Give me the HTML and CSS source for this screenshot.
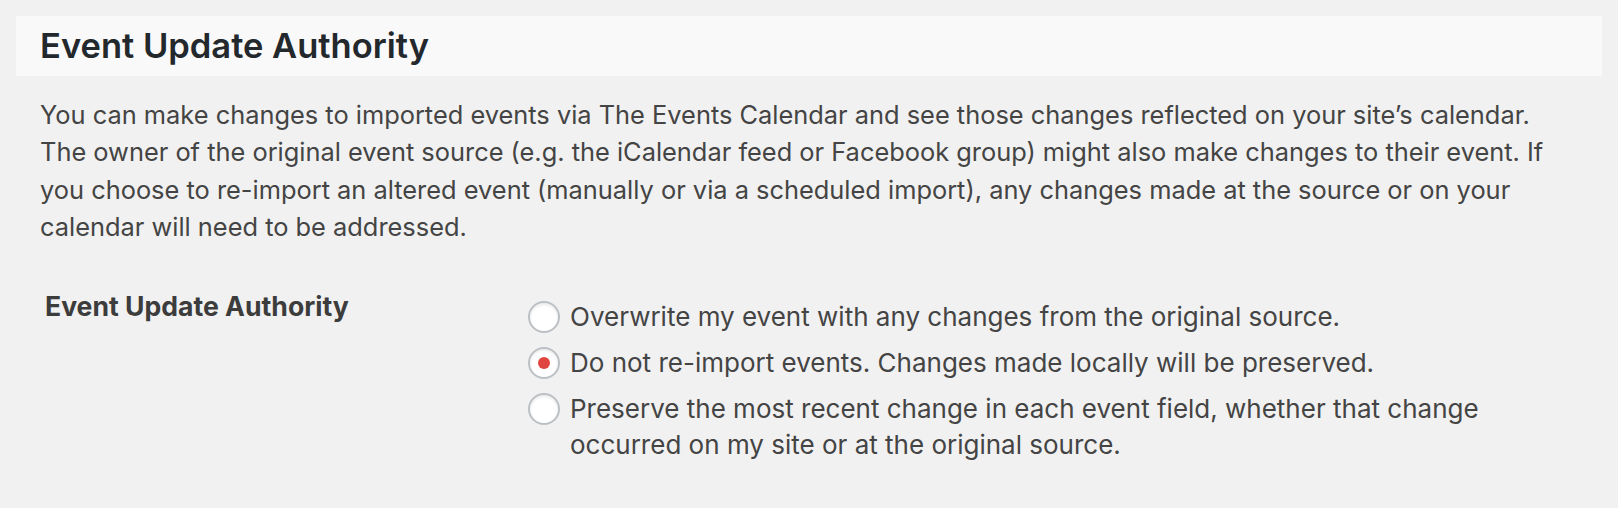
FILE: index.html
```html
<!DOCTYPE html>
<html lang="en">
<head>
<meta charset="utf-8">
<title>Event Update Authority</title>
<link rel="stylesheet" href="styles.css">
</head>
<body>
<div class="page">
  <div class="section-head">
    <h3 class="section-title">Event Update Authority</h3>
  </div>
  <p class="intro">You can make changes to imported events via The Events Calendar and see those changes reflected on your site’s calendar.<br>The owner of the original event source (e.g. the iCalendar feed or Facebook group) might also make changes to their event. If<br>you choose to re-import an altered event (manually or via a scheduled import), any changes made at the source or on your<br>calendar will need to be addressed.</p>
  <div class="field">
    <div class="field-label">Event Update Authority</div>
    <div class="options">
      <label class="option">
        <span class="radio"></span>
        <span class="option-text">Overwrite my event with any changes from the original source.</span>
      </label>
      <label class="option">
        <span class="radio checked"></span>
        <span class="option-text">Do not re-import events. Changes made locally will be preserved.</span>
      </label>
      <label class="option">
        <span class="radio"></span>
        <span class="option-text">Preserve the most recent change in each event field, whether that change<br>occurred on my site or at the original source.</span>
      </label>
    </div>
  </div>
</div>
</body>
</html>
```

FILE: styles.css
```css
html, body {
  margin: 0;
  padding: 0;
  background: #f1f1f1;
}

body {
  font-family: Inter, "Noto Sans", "Liberation Sans", sans-serif;
  color: #444;
}

.page {
  padding: 16px 16px 0 16px;
}

.section-head {
  background: #f9f9f9;
  height: 60px;
  padding-left: 24px;
  display: flex;
  align-items: center;
}

.section-title {
  margin: 0;
  font-size: 34.5px;
  font-weight: 600;
  line-height: 60px;
  color: #23282d;
}

.intro {
  margin: 20px 0 0 24px;
  font-size: 25.4px;
  line-height: 37.33px;
  color: #444;
  white-space: nowrap;
}

.field {
  display: flex;
  margin: 48px 0 0 24px;
}

.field-label {
  width: 483px;
  padding-left: 5px;
  flex: none;
  font-size: 26.6px;
  font-weight: 700;
  line-height: 27px;
  color: #3c3c3c;
}

.options {
  display: flex;
  flex-direction: column;
  gap: 9.6px;
  padding-top: 5.3px;
}

.option {
  display: flex;
  align-items: flex-start;
  gap: 10px;
  font-size: 26px;
  line-height: 36.4px;
  color: #444;
}

.option-text {
  white-space: nowrap;
}

.radio {
  flex: none;
  width: 32px;
  height: 32px;
  margin-top: 2.2px;
  box-sizing: border-box;
  border: 2px solid #bcc0c4;
  border-radius: 50%;
  background: #fff;
  box-shadow: inset 0 2px 3px rgba(0, 0, 0, 0.08);
  display: flex;
  align-items: center;
  justify-content: center;
}

.radio.checked::after {
  content: "";
  width: 12px;
  height: 12px;
  border-radius: 50%;
  background: #e0443e;
}
```
